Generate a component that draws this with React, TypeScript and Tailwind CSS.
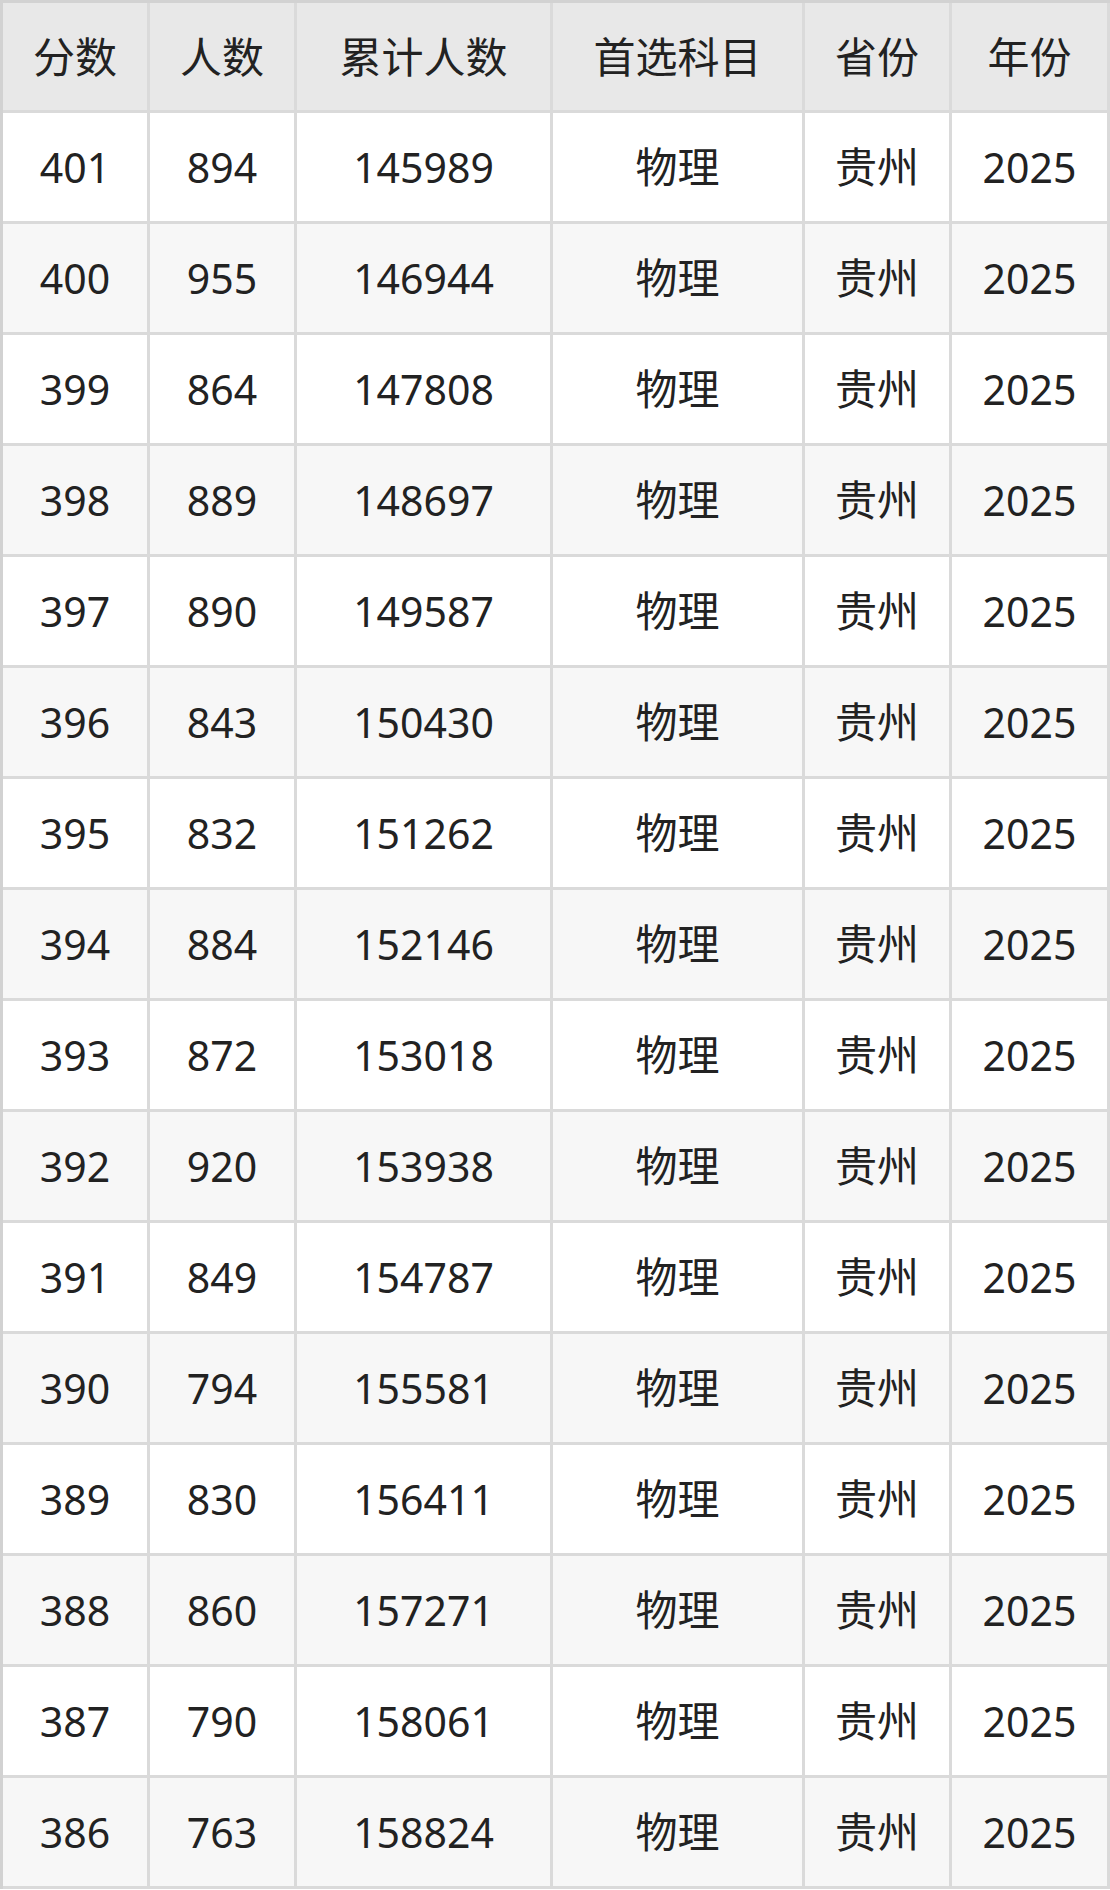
import React from 'react';

const rows: [number, number, number][] = [
  [401, 894, 145989],
  [400, 955, 146944],
  [399, 864, 147808],
  [398, 889, 148697],
  [397, 890, 149587],
  [396, 843, 150430],
  [395, 832, 151262],
  [394, 884, 152146],
  [393, 872, 153018],
  [392, 920, 153938],
  [391, 849, 154787],
  [390, 794, 155581],
  [389, 830, 156411],
  [388, 860, 157271],
  [387, 790, 158061],
  [386, 763, 158824],
];

const headers = ['分数', '人数', '累计人数', '首选科目', '省份', '年份'];

const cell =
  'flex items-center justify-center border-r-[3px] border-b-[3px] border-[#dadada]';

export default function App() {
  return (
    <div
      className="w-[1110px] bg-white text-[#222] text-[42px] leading-none"
      style={{ fontFamily: '"Noto Sans", "Noto Sans CJK SC", sans-serif' }}
    >
      <div className="grid grid-cols-[147px_147px_256px_252px_147px_158px] border-l-[3px] border-t-[3px] border-[#d2d2d2]">
        {headers.map((h) => (
          <div key={h} className={`${cell} h-[110px] bg-[#e8e8e8] border-[#d2d2d2]`}>
            {h}
          </div>
        ))}
        {rows.map(([score, count, total], i) => {
          const bg = i % 2 === 1 ? 'bg-[#f7f7f7]' : 'bg-white';
          return (
            <React.Fragment key={score}>
              <div className={`${cell} h-[111px] text-[41px] ${bg}`}>{score}</div>
              <div className={`${cell} h-[111px] text-[41px] ${bg}`}>{count}</div>
              <div className={`${cell} h-[111px] text-[41px] ${bg}`}>{total}</div>
              <div className={`${cell} h-[111px] ${bg}`}>物理</div>
              <div className={`${cell} h-[111px] ${bg}`}>贵州</div>
              <div className={`${cell} h-[111px] text-[41px] ${bg}`}>2025</div>
            </React.Fragment>
          );
        })}
      </div>
    </div>
  );
}
